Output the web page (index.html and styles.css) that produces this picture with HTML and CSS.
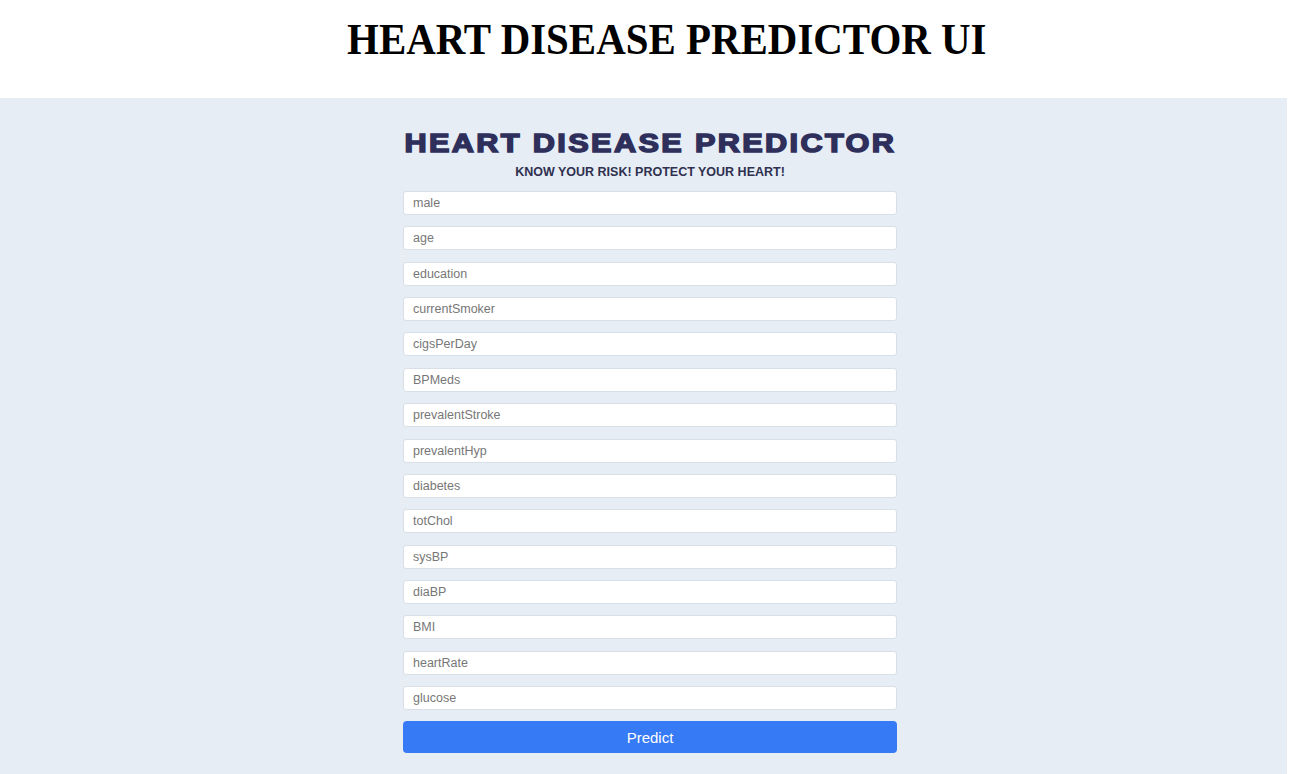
FILE: index.html
```html
<!DOCTYPE html>
<html>
<head>
<meta charset="utf-8">
<title>Heart Disease Predictor UI</title>
<link rel="stylesheet" href="styles.css">
</head>
<body>
<header class="page-head">
  <h1 class="page-title">HEART DISEASE PREDICTOR UI</h1>
</header>
<main class="stage">
  <form class="card">
    <h2 class="brand"><span class="brand-text">HEART DISEASE PREDICTOR</span></h2>
    <p class="tagline">KNOW YOUR RISK! PROTECT YOUR HEART!</p>
    <input class="field" type="text" placeholder="male">
    <input class="field" type="text" placeholder="age">
    <input class="field" type="text" placeholder="education">
    <input class="field" type="text" placeholder="currentSmoker">
    <input class="field" type="text" placeholder="cigsPerDay">
    <input class="field" type="text" placeholder="BPMeds">
    <input class="field" type="text" placeholder="prevalentStroke">
    <input class="field" type="text" placeholder="prevalentHyp">
    <input class="field" type="text" placeholder="diabetes">
    <input class="field" type="text" placeholder="totChol">
    <input class="field" type="text" placeholder="sysBP">
    <input class="field" type="text" placeholder="diaBP">
    <input class="field" type="text" placeholder="BMI">
    <input class="field" type="text" placeholder="heartRate">
    <input class="field" type="text" placeholder="glucose">
    <button class="predict" type="button">Predict</button>
  </form>
</main>
</body>
</html>
```
FILE: styles.css
```css
html, body {
  margin: 0;
  padding: 0;
  background: #ffffff;
}

.page-head {
  height: 98px;
  display: flex;
  justify-content: center;
  padding-left: 45px;
  box-sizing: border-box;
}

.page-title {
  margin: 14px 0 0 0;
  font-family: "Liberation Serif", "Times New Roman", serif;
  font-weight: bold;
  font-size: 44px;
  line-height: 52px;
  color: #000;
  transform: scaleX(0.93);
  white-space: nowrap;
}

.stage {
  width: 1287px;
  background: #e6edf5;
  display: flex;
  justify-content: center;
  padding: 28px 0 21px 13px;
  box-sizing: border-box;
  min-height: 676px;
}

.card {
  width: 494px;
  display: flex;
  flex-direction: column;
  align-items: stretch;
}

.brand {
  margin: 0;
  text-align: center;
  font-family: "Liberation Sans", Arial, sans-serif;
  font-weight: bold;
  font-size: 26px;
  line-height: 34px;
  color: #2f2f5b;
  white-space: nowrap;
}

.brand-text {
  display: inline-block;
  letter-spacing: 2px;
  -webkit-text-stroke: 1.5px #2f2f5b;
  transform: scaleX(1.18);
}

.tagline {
  margin: 5px 0 11px 0;
  text-align: center;
  font-family: "Liberation Sans", Arial, sans-serif;
  font-weight: bold;
  font-size: 12.5px;
  line-height: 15px;
  color: #30304f;
}

.field {
  display: block;
  height: 24px;
  margin: 0 0 11.36px 0;
  padding: 0 9px;
  border: 1px solid #d9dfe6;
  border-radius: 3px;
  background: #fff;
  box-sizing: border-box;
  font-family: "Liberation Sans", Arial, sans-serif;
  font-size: 12.5px;
  color: #333;
  outline: none;
}

.field::placeholder {
  color: #777;
}

.predict {
  height: 32px;
  border: none;
  border-radius: 4px;
  background: #367af6;
  color: #fff;
  font-family: "Liberation Sans", Arial, sans-serif;
  font-size: 15px;
  cursor: pointer;
}
```
